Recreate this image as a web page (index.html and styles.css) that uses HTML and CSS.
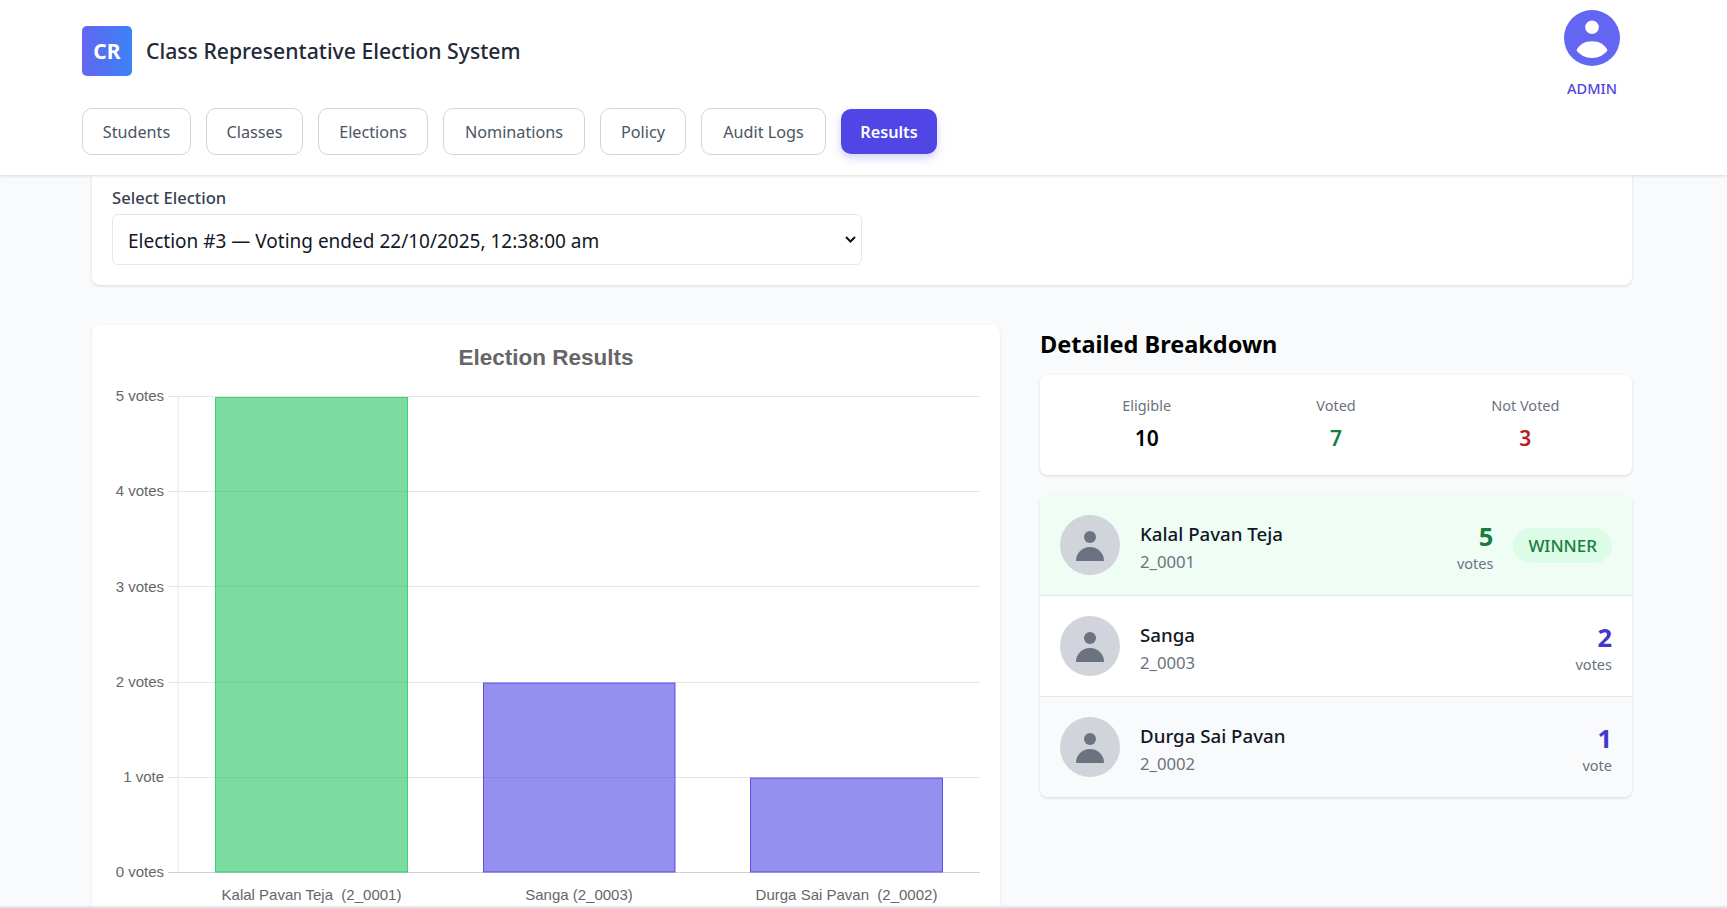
FILE: index.html
```html
<!DOCTYPE html>
<html lang="en">
<head>
<meta charset="utf-8">
<title>Class Representative Election System</title>
<link rel="stylesheet" href="styles.css">
</head>
<body>
<header class="site-header">
  <div class="header-top">
    <div class="brand">
      <div class="logo">CR</div>
      <div class="brand-title">Class Representative Election System</div>
    </div>
    <div class="account">
      <svg class="account-icon" viewBox="0 0 56 56" aria-hidden="true">
        <circle cx="28" cy="28" r="28" fill="#6366f1"/>
        <circle cx="28" cy="17.3" r="6.8" fill="#fff"/>
        <path d="M12.5 40.5C15 34.5 21 31.3 28 31.3S41 34.5 43.5 40.5C40 45 34.5 48 28 48S16 45 12.5 40.5Z" fill="#fff"/>
      </svg>
      <div class="account-name">ADMIN</div>
    </div>
  </div>
  <nav class="tabs">
    <button class="tab tab-students">Students</button>
    <button class="tab tab-classes">Classes</button>
    <button class="tab tab-elections">Elections</button>
    <button class="tab tab-nominations">Nominations</button>
    <button class="tab tab-policy">Policy</button>
    <button class="tab tab-audit">Audit Logs</button>
    <button class="tab tab-active">Results</button>
  </nav>
</header>
<main class="content">
  <section class="select-card">
    <label class="select-label" for="election">Select Election</label>
    <div class="select-wrap">
      <select class="select-box" id="election">
        <option>Election #3 — Voting ended 22/10/2025, 12:38:00 am</option>
      </select>
      <svg class="select-arrow" viewBox="0 0 11 7" aria-hidden="true"><path d="M1 1l4.5 4.5L10 1" fill="none" stroke="#111" stroke-width="2"/></svg>
    </div>
  </section>
  <div class="results-grid">
    <section class="chart-card">
      <svg class="chart" viewBox="92 325 908 590" width="908" height="590" role="img" aria-label="Election Results chart">
        <g class="grid-lines">
          <line x1="168" y1="396.5" x2="980" y2="396.5"/>
          <line x1="168" y1="491.5" x2="980" y2="491.5"/>
          <line x1="168" y1="586.5" x2="980" y2="586.5"/>
          <line x1="168" y1="682.5" x2="980" y2="682.5"/>
          <line x1="168" y1="777.5" x2="980" y2="777.5"/>
          <line x1="178" y1="396" x2="178" y2="872"/>
        </g>
        <line class="axis-base" x1="168" y1="872.5" x2="980" y2="872.5"/>
        <rect class="bar bar-green" x="215.5" y="397.5" width="192" height="474.5"/>
        <rect class="bar bar-purple" x="483.5" y="683" width="191.5" height="189"/>
        <rect class="bar bar-purple" x="750.5" y="778" width="192" height="94"/>
        <text class="chart-title" x="546" y="365">Election Results</text>
        <g class="y-labels">
          <text x="164" y="401">5 votes</text>
          <text x="164" y="496">4 votes</text>
          <text x="164" y="591.5">3 votes</text>
          <text x="164" y="687">2 votes</text>
          <text x="164" y="782">1 vote</text>
          <text x="164" y="877">0 votes</text>
        </g>
        <g class="x-labels">
          <text x="311.5" y="900" xml:space="preserve">Kalal Pavan Teja  (2_0001)</text>
          <text x="579" y="900">Sanga (2_0003)</text>
          <text x="846.5" y="900" xml:space="preserve">Durga Sai Pavan  (2_0002)</text>
        </g>
      </svg>
    </section>
    <aside class="breakdown">
      <h2 class="breakdown-title">Detailed Breakdown</h2>
      <div class="stats-card">
        <div class="stat"><div class="stat-label">Eligible</div><div class="stat-value">10</div></div>
        <div class="stat"><div class="stat-label">Voted</div><div class="stat-value stat-green">7</div></div>
        <div class="stat"><div class="stat-label">Not Voted</div><div class="stat-value stat-red">3</div></div>
      </div>
      <div class="candidates">
        <div class="candidate candidate-winner">
          <svg class="candidate-icon" viewBox="0 0 60 60" aria-hidden="true"><circle cx="30" cy="30" r="30" fill="#d1d5db"/><circle cx="30" cy="22" r="6" fill="#6b7280"/><path d="M16 46a14 14 0 0 1 28 0Z" fill="#6b7280"/></svg>
          <div class="candidate-info"><div class="candidate-name">Kalal Pavan Teja</div><div class="candidate-id">2_0001</div></div>
          <div class="candidate-votes"><div class="vote-count vote-green">5</div><div class="vote-unit">votes</div></div>
          <div class="winner-pill">WINNER</div>
        </div>
        <div class="candidate">
          <svg class="candidate-icon" viewBox="0 0 60 60" aria-hidden="true"><circle cx="30" cy="30" r="30" fill="#d1d5db"/><circle cx="30" cy="22" r="6" fill="#6b7280"/><path d="M16 46a14 14 0 0 1 28 0Z" fill="#6b7280"/></svg>
          <div class="candidate-info"><div class="candidate-name">Sanga</div><div class="candidate-id">2_0003</div></div>
          <div class="candidate-votes"><div class="vote-count">2</div><div class="vote-unit">votes</div></div>
        </div>
        <div class="candidate candidate-last">
          <svg class="candidate-icon" viewBox="0 0 60 60" aria-hidden="true"><circle cx="30" cy="30" r="30" fill="#d1d5db"/><circle cx="30" cy="22" r="6" fill="#6b7280"/><path d="M16 46a14 14 0 0 1 28 0Z" fill="#6b7280"/></svg>
          <div class="candidate-info"><div class="candidate-name">Durga Sai Pavan</div><div class="candidate-id">2_0002</div></div>
          <div class="candidate-votes"><div class="vote-count">1</div><div class="vote-unit">vote</div></div>
        </div>
      </div>
    </aside>
  </div>
</main>
<footer class="page-edge"></footer>
</body>
</html>
```
FILE: styles.css
```css
* { box-sizing: border-box; }
html, body { height: 100%; }
body {
  margin: 0;
  height: 100vh;
  display: flex;
  flex-direction: column;
  overflow: hidden;
  background: #f9fafb;
  color: #111827;
  font-family: "Noto Sans", "Open Sans", sans-serif;
}
.site-header {
  flex: none;
  height: 175px;
  padding: 10px 107px 0 82px;
  background: #fff;
  box-shadow: 0 1px 3px rgba(0, 0, 0, .14);
  position: relative;
  z-index: 2;
}
.header-top { display: flex; justify-content: space-between; align-items: flex-start; height: 88px; }
.brand { display: flex; align-items: center; gap: 14px; margin-top: 16px; }
.logo {
  width: 50px; height: 50px;
  border-radius: 5px;
  background: linear-gradient(90deg, #6366f1, #3b82f6);
  color: #fff;
  font-weight: 700;
  font-size: 21px;
  display: flex; align-items: center; justify-content: center;
}
.brand-title { font-size: 21.2px; line-height: 28px; font-weight: 500; color: #1f2937; }
.account { display: flex; flex-direction: column; align-items: center; width: 56px; }
.account-icon { width: 56px; height: 56px; display: block; }
.account-name { margin-top: 12px; font-size: 14.5px; line-height: 20px; color: #4f46e5; font-weight: 500; }
.tabs { display: flex; align-items: center; gap: 15px; margin-top: 10px; }
.tab {
  height: 47px;
  padding: 1px 0 0;
  border: 1px solid #d1d5db;
  border-radius: 10px;
  background: #fff;
  color: #4b5563;
  font: 400 16.2px "Noto Sans", sans-serif;
}
.tab-students { width: 109px; }
.tab-classes { width: 97px; }
.tab-elections { width: 110px; }
.tab-nominations { width: 142px; }
.tab-policy { width: 86px; }
.tab-audit { width: 125px; }
.tab-active {
  width: 96px;
  height: 45px;
  border: 0;
  background: #4f46e5;
  color: #fff;
  font-weight: 600;
  box-shadow: 0 4px 8px rgba(79, 70, 229, .25);
}
.content { flex: 1; min-height: 0; overflow: hidden; padding: 0 95px 0 92px; }
.select-card {
  background: #fff;
  border-radius: 0 0 8px 8px;
  padding: 11px 20px 20px;
  box-shadow: 0 1px 3px rgba(0, 0, 0, .14);
}
.select-label { display: block; font-size: 16.6px; line-height: 24px; font-weight: 500; color: #374151; margin-bottom: 4px; }
.select-wrap { position: relative; width: 750px; }
.select-box {
  display: block;
  width: 100%;
  height: 51px;
  padding: 2px 30px 0 15px;
  border: 1px solid #e5e7eb;
  border-radius: 6px;
  background: #fff;
  color: #111827;
  font: 400 19px "Noto Sans", sans-serif;
  appearance: none;
}
.select-arrow { position: absolute; top: 22px; left: 733px; width: 11px; height: 7px; pointer-events: none; }
.results-grid { display: grid; grid-template-columns: 908px 592px; gap: 40px; margin-top: 40px; }
.chart-card {
  background: #fff;
  border-radius: 8px;
  height: 590px;
  box-shadow: 0 1px 3px rgba(0, 0, 0, .1);
}
.chart { display: block; }
.grid-lines line { stroke: #e6e6e6; stroke-width: 1; }
.axis-base { stroke: #d0d0d0; stroke-width: 1; }
.bar { stroke-width: 1; }
.bar-green { fill: rgba(34, 197, 94, .6); stroke: rgba(34, 197, 94, .8); }
.bar-purple { fill: rgba(79, 70, 229, .6); stroke: rgba(79, 70, 229, .9); }
.chart-title { font: 700 22.5px "Liberation Sans", Arial, sans-serif; fill: #666; text-anchor: middle; }
.y-labels text { font: 400 15px "Liberation Sans", Arial, sans-serif; fill: #666; text-anchor: end; }
.x-labels text { font: 400 15px "Liberation Sans", Arial, sans-serif; fill: #666; text-anchor: middle; white-space: pre; }
.breakdown-title { margin: 0 0 12px; font-size: 23.5px; line-height: 38px; font-weight: 700; color: #000; }
.stats-card {
  display: grid;
  grid-template-columns: repeat(3, 1fr);
  height: 100px;
  padding: 18px 12px 0;
  background: #fff;
  border-radius: 8px;
  box-shadow: 0 1px 3px rgba(0, 0, 0, .14);
  text-align: center;
}
.stat-label { font-size: 14.5px; line-height: 24px; color: #6b7280; }
.stat-value { font-size: 21px; line-height: 30px; margin-top: 6px; font-weight: 600; color: #000; }
.stat-green { color: #15803d; }
.stat-red { color: #b91c1c; }
.candidates {
  margin-top: 20px;
  border-radius: 8px;
  overflow: hidden;
  background: #fff;
  box-shadow: 0 1px 3px rgba(0, 0, 0, .14);
}
.candidate {
  display: flex;
  align-items: center;
  padding: 20px;
  height: 101px;
  border-bottom: 1px solid #e5e7eb;
}
.candidate-winner { background: #f0fdf4; }
.candidate-last { background: #f9fafb; border-bottom: 0; height: 100px; }
.candidate-icon { width: 60px; height: 60px; flex: none; margin-right: 20px; }
.candidate-info { flex: 1; padding-top: 3px; }
.candidate-name { font-size: 18.7px; line-height: 27px; font-weight: 500; color: #111827; }
.candidate-id { font-size: 16.7px; line-height: 24px; margin-top: 3px; color: #6b7280; }
.candidate-votes { text-align: right; padding-top: 3px; }
.vote-count { font-size: 25.5px; line-height: 31px; margin-bottom: 1px; font-weight: 700; color: #4338ca; }
.vote-green { color: #15803d; }
.vote-unit { font-size: 14.5px; line-height: 20px; color: #6b7280; }
.winner-pill {
  margin-left: 20px;
  height: 35px;
  padding: 0 15px;
  border-radius: 18px;
  background: #dcfce7;
  color: #15803d;
  font-size: 17px;
  font-weight: 500;
  line-height: 35px;
}
.page-edge { flex: none; height: 2px; background: #e5e7eb; position: relative; z-index: 2; }
```
